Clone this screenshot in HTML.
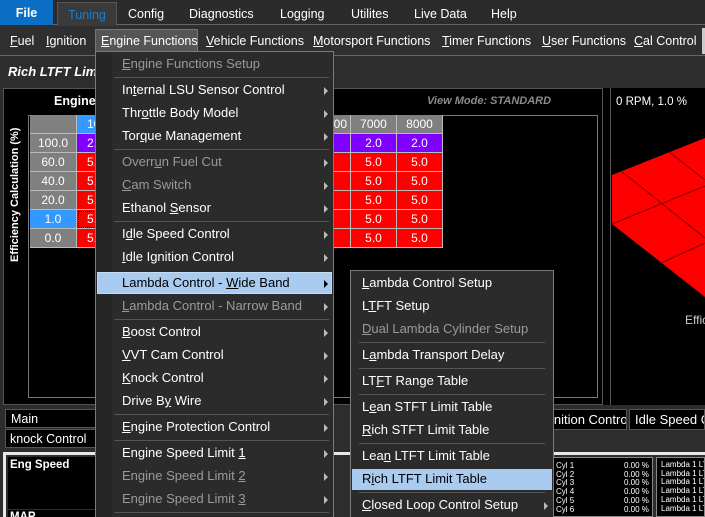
<!DOCTYPE html>
<html><head><meta charset="utf-8"><style>
*{margin:0;padding:0;box-sizing:border-box}
html,body{overflow:hidden}
body{width:705px;height:517px;overflow:hidden;background:#2d2d2d;font-family:"Liberation Sans","DejaVu Sans",sans-serif;font-size:12.5px;color:#fff;position:relative}
.a{position:absolute;white-space:nowrap}
u{text-decoration:underline}
.mi{position:absolute;left:122px;height:22px;line-height:22px;font-size:13px;color:#fff;white-space:nowrap}
.g{color:#9a9a9a}
.ar{position:absolute;right:4px;width:0;height:0;border-top:4px solid transparent;border-bottom:4px solid transparent;border-left:4px solid #bbb}
.sep{position:absolute;left:112px;right:8px;height:1px;background:#555}
.si{position:absolute;left:11px;height:22px;line-height:22px;font-size:13px;white-space:nowrap}
.ssep{position:absolute;left:8px;right:8px;height:1px;background:#555}
.c{position:absolute;height:19px;line-height:19px;text-align:center;font-size:12px;border-right:1px solid #bbb;border-bottom:1px solid #bbb}
</style></head><body>
<!-- top menu -->
<div class="a" style="left:0;top:0;width:705px;height:25px;background:#2b2b2b;border-bottom:1px solid #666"></div>
<div class="a" style="left:0;top:0;width:53px;height:25px;background:#0a6fc4;font-weight:bold;line-height:26px;text-align:center;font-size:12.5px">File</div>
<div class="a" style="left:57px;top:2px;width:60px;height:24px;background:#3a3a3a;border:1px solid #555;border-bottom:none;color:#1a7fd0;line-height:24px;text-align:center">Tuning</div>
<div class="a" style="left:128px;top:7px">Config</div>
<div class="a" style="left:189px;top:7px">Diagnostics</div>
<div class="a" style="left:280px;top:7px">Logging</div>
<div class="a" style="left:351px;top:7px">Utilites</div>
<div class="a" style="left:414px;top:7px">Live Data</div>
<div class="a" style="left:491px;top:7px">Help</div>
<!-- second bar -->
<div class="a" style="left:0;top:26px;width:705px;height:30px;background:#2f2f2f;border-bottom:1px solid #666"></div>
<div class="a" style="left:10px;top:34px"><u>F</u>uel</div>
<div class="a" style="left:46px;top:34px"><u>I</u>gnition</div>
<div class="a" style="left:95px;top:29px;width:103px;height:23px;background:#555;border:1px solid #777"></div>
<div class="a" style="left:101px;top:34px"><u>E</u>ngine Functions</div>
<div class="a" style="left:206px;top:34px"><u>V</u>ehicle Functions</div>
<div class="a" style="left:313px;top:34px"><u>M</u>otorsport Functions</div>
<div class="a" style="left:442px;top:34px"><u>T</u>imer Functions</div>
<div class="a" style="left:542px;top:34px"><u>U</u>ser Functions</div>
<div class="a" style="left:634px;top:34px"><u>C</u>al Control</div>
<div class="a" style="left:702px;top:28px;width:3px;height:26px;background:#ccc"></div>
<div class="a" style="left:8px;top:64px;font-weight:bold;font-style:italic;font-size:13px">Rich LTFT Limit Table</div>
<!-- main left panel -->
<div class="a" style="left:3px;top:88px;width:600px;height:317px;background:#000;border:1px solid #555"></div>
<div class="a" style="left:54px;top:94px;font-weight:bold;font-size:12.5px">Engine Speed</div>
<div class="a" style="left:427px;top:95px;font-weight:bold;font-style:italic;font-size:11px;color:#8a8a8a">View Mode: STANDARD</div>
<div class="a" style="left:28px;top:115px;width:570px;height:283px;border:1px solid #777"></div>
<div class="a" style="left:9px;top:262px;transform:rotate(-90deg);transform-origin:0 0;font-weight:bold;font-size:11px">Efficiency Calculation (%)</div>
<!-- table -->
<div class="c" style="left:30px;top:115px;width:47px;background:#808080"></div>
<div class="c" style="left:77px;top:115px;width:60px;background:#3399ff;text-align:left;padding-left:10px">1000</div>
<div class="c" style="left:30px;top:134px;width:47px;background:#808080">100.0</div>
<div class="c" style="left:30px;top:153px;width:47px;background:#808080">60.0</div>
<div class="c" style="left:30px;top:172px;width:47px;background:#808080">40.0</div>
<div class="c" style="left:30px;top:191px;width:47px;background:#808080">20.0</div>
<div class="c" style="left:30px;top:210px;width:47px;background:#3399ff">1.0</div>
<div class="c" style="left:30px;top:229px;width:47px;background:#808080">0.0</div>
<div class="c" style="left:77px;top:134px;width:60px;background:#8000ff;text-align:left;padding-left:10px">2.0</div>
<div class="c" style="left:77px;top:153px;width:60px;background:#f00;text-align:left;padding-left:10px">5.0</div>
<div class="c" style="left:77px;top:172px;width:60px;background:#f00;text-align:left;padding-left:10px">5.0</div>
<div class="c" style="left:77px;top:191px;width:60px;background:#f00;text-align:left;padding-left:10px">5.0</div>
<div class="c" style="left:77px;top:210px;width:60px;background:#f00;text-align:left;padding-left:10px;outline:1px dotted #000;outline-offset:-2px">5.0</div>
<div class="c" style="left:77px;top:229px;width:60px;background:#f00;text-align:left;padding-left:10px">5.0</div>
<div class="c" style="left:300px;top:115px;width:51px;background:#808080;text-align:right;padding-right:3px">6000</div>
<div class="c" style="left:351px;top:115px;width:46px;background:#808080">7000</div>
<div class="c" style="left:397px;top:115px;width:46px;background:#808080">8000</div>
<div class="c" style="left:300px;top:134px;width:51px;background:#8000ff"></div>
<div class="c" style="left:351px;top:134px;width:46px;background:#8000ff">2.0</div>
<div class="c" style="left:397px;top:134px;width:46px;background:#8000ff">2.0</div>
<div class="c" style="left:300px;top:153px;width:51px;background:#f00"></div><div class="c" style="left:351px;top:153px;width:46px;background:#f00">5.0</div><div class="c" style="left:397px;top:153px;width:46px;background:#f00">5.0</div>
<div class="c" style="left:300px;top:172px;width:51px;background:#f00"></div><div class="c" style="left:351px;top:172px;width:46px;background:#f00">5.0</div><div class="c" style="left:397px;top:172px;width:46px;background:#f00">5.0</div>
<div class="c" style="left:300px;top:191px;width:51px;background:#f00"></div><div class="c" style="left:351px;top:191px;width:46px;background:#f00">5.0</div><div class="c" style="left:397px;top:191px;width:46px;background:#f00">5.0</div>
<div class="c" style="left:300px;top:210px;width:51px;background:#f00"></div><div class="c" style="left:351px;top:210px;width:46px;background:#f00">5.0</div><div class="c" style="left:397px;top:210px;width:46px;background:#f00">5.0</div>
<div class="c" style="left:300px;top:229px;width:51px;background:#f00"></div><div class="c" style="left:351px;top:229px;width:46px;background:#f00">5.0</div><div class="c" style="left:397px;top:229px;width:46px;background:#f00">5.0</div>
<!-- right panel -->
<div class="a" style="left:603px;top:88px;width:8px;height:317px;background:#000;border-right:1px solid #555"></div>
<div class="a" style="left:611px;top:88px;width:94px;height:317px;background:#000"></div>
<svg class="a" style="left:611px;top:88px" width="94" height="317">
<polygon points="1,87 94,50 94,209 1,136" fill="#ff0000"/>
<g stroke="#800000" stroke-width="1"><line x1="10" y1="83" x2="94" y2="150"/><line x1="58" y1="64" x2="94" y2="92"/><line x1="1" y1="136" x2="94" y2="98"/><line x1="50" y1="175" x2="94" y2="155"/></g>
<text x="5" y="17" fill="#fff" font-size="11.5" font-family="Liberation Sans">0 RPM, 1.0 %</text>
<text x="74" y="236" fill="#ccc" font-size="12" font-family="Liberation Sans">Efficiency</text>
</svg>
<!-- bottom -->
<div class="a" style="left:0;top:405px;width:705px;height:112px;background:#2d2d2d"></div>
<div class="a" style="left:5px;top:409px;width:92px;height:19px;background:#000;border:1px solid #555;padding-left:5px;line-height:18px">Main</div>
<div class="a" style="left:5px;top:429px;width:92px;height:19px;background:#000;border:1px solid #555;padding-left:4px;line-height:18px">knock Control</div>
<div class="a" style="left:540px;top:409px;width:87px;height:21px;background:#000;border:1px solid #555;line-height:20px;padding-left:2px;font-size:13px;overflow:hidden">Ignition Control</div>
<div class="a" style="left:629px;top:409px;width:76px;height:21px;background:#000;border:1px solid #555;line-height:20px;padding-left:5px;font-size:13px;overflow:hidden">Idle Speed Control</div>
<div class="a" style="left:3px;top:452px;width:702px;height:3px;background:#e8e8e8"></div>
<div class="a" style="left:3px;top:452px;width:3px;height:65px;background:#e8e8e8"></div>
<div class="a" style="left:8px;top:457px;width:90px;height:52px;background:#000;font-weight:bold;font-size:11.5px;padding:2px">Eng Speed</div>
<div class="a" style="left:8px;top:510px;width:90px;height:7px;background:#000;font-weight:bold;font-size:11.5px;padding-left:2px;line-height:14px;overflow:hidden">MAP</div>
<div class="a" style="left:553px;top:457px;width:100px;height:60px;background:#000;border:1px solid #888;font-size:8px;line-height:8.7px;padding:4px 0 0 2px;overflow:hidden">Cyl 1<span style="position:absolute;left:70px">0.00 %</span><br>Cyl 2<span style="position:absolute;left:70px">0.00 %</span><br>Cyl 3<span style="position:absolute;left:70px">0.00 %</span><br>Cyl 4<span style="position:absolute;left:70px">0.00 %</span><br>Cyl 5<span style="position:absolute;left:70px">0.00 %</span><br>Cyl 6<span style="position:absolute;left:70px">0.00 %</span></div>
<div class="a" style="left:656px;top:457px;width:49px;height:60px;background:#000;border:1px solid #888;font-size:8px;line-height:8.7px;padding:3px 0 0 4px;overflow:hidden">Lambda 1 LTFT<br>Lambda 1 LTFT<br>Lambda 1 LTFT<br>Lambda 1 LTFT<br>Lambda 1 LTFT<br>Lambda 1 LTFT</div>
<!-- main dropdown -->
<div class="a" style="left:95px;top:51px;width:239px;height:466px;background:#2b2b2b;border:1px solid #7a7a7a;border-bottom:none"></div>
<div class="a" style="left:96px;top:52px;width:16px;height:465px;background:#262626"></div>
<div class="mi g" style="top:53px"><u>E</u>ngine Functions Setup</div>
<div class="sep a" style="top:77px;left:114px;width:215px"></div>
<div class="mi" style="top:79px">In<u>t</u>ernal LSU Sensor Control</div><div class="ar a" style="left:324px;top:87px"></div>
<div class="mi" style="top:102px">Thr<u>o</u>ttle Body Model</div><div class="ar a" style="left:324px;top:110px"></div>
<div class="mi" style="top:125px">Tor<u>q</u>ue Management</div><div class="ar a" style="left:324px;top:133px"></div>
<div class="sep a" style="top:149px;left:114px;width:215px"></div>
<div class="mi g" style="top:151px">Overr<u>u</u>n Fuel Cut</div><div class="ar a" style="left:324px;top:159px"></div>
<div class="mi g" style="top:174px"><u>C</u>am Switch</div><div class="ar a" style="left:324px;top:182px"></div>
<div class="mi" style="top:197px">Ethanol <u>S</u>ensor</div><div class="ar a" style="left:324px;top:205px"></div>
<div class="sep a" style="top:221px;left:114px;width:215px"></div>
<div class="mi" style="top:223px">I<u>d</u>le Speed Control</div><div class="ar a" style="left:324px;top:231px"></div>
<div class="mi" style="top:246px"><u>I</u>dle Ignition Control</div><div class="ar a" style="left:324px;top:254px"></div>
<div class="a" style="left:97px;top:272px;width:235px;height:22px;background:#a9cbf0;border:1px solid #c5dcf5"></div>
<div class="mi" style="top:272px;color:#000">Lambda Control - <u>W</u>ide Band</div><div class="ar a" style="left:324px;top:280px;border-left-color:#000"></div>
<div class="mi g" style="top:295px"><u>L</u>ambda Control - Narrow Band</div><div class="ar a" style="left:324px;top:303px"></div>
<div class="sep a" style="top:319px;left:114px;width:215px"></div>
<div class="mi" style="top:321px"><u>B</u>oost Control</div><div class="ar a" style="left:324px;top:329px"></div>
<div class="mi" style="top:344px"><u>V</u>VT Cam Control</div><div class="ar a" style="left:324px;top:352px"></div>
<div class="mi" style="top:367px"><u>K</u>nock Control</div><div class="ar a" style="left:324px;top:375px"></div>
<div class="mi" style="top:390px">Drive B<u>y</u> Wire</div><div class="ar a" style="left:324px;top:398px"></div>
<div class="sep a" style="top:414px;left:114px;width:215px"></div>
<div class="mi" style="top:416px"><u>E</u>ngine Protection Control</div><div class="ar a" style="left:324px;top:424px"></div>
<div class="sep a" style="top:440px;left:114px;width:215px"></div>
<div class="mi" style="top:442px">Engine Speed Limit <u>1</u></div><div class="ar a" style="left:324px;top:450px"></div>
<div class="mi g" style="top:465px">Engine Speed Limit <u>2</u></div><div class="ar a" style="left:324px;top:473px"></div>
<div class="mi g" style="top:488px">Engine Speed Limit <u>3</u></div><div class="ar a" style="left:324px;top:496px"></div>
<div class="sep a" style="top:512px;left:114px;width:215px"></div>
<!-- submenu -->
<div class="a" style="left:350px;top:270px;width:204px;height:247px;background:#2b2b2b;border:1px solid #7a7a7a;border-bottom:none">
<div class="si" style="top:1px"><u>L</u>ambda Control Setup</div>
<div class="si" style="top:24px">L<u>T</u>FT Setup</div>
<div class="si g" style="top:47px"><u>D</u>ual Lambda Cylinder Setup</div>
<div class="ssep" style="top:71px"></div>
<div class="si" style="top:73px">L<u>a</u>mbda Transport Delay</div>
<div class="ssep" style="top:97px"></div>
<div class="si" style="top:99px">LT<u>F</u>T Range Table</div>
<div class="ssep" style="top:123px"></div>
<div class="si" style="top:125px">L<u>e</u>an STFT Limit Table</div>
<div class="si" style="top:148px"><u>R</u>ich STFT Limit Table</div>
<div class="ssep" style="top:172px"></div>
<div class="si" style="top:174px">Lea<u>n</u> LTFT Limit Table</div>
<div style="position:absolute;left:1px;top:198px;width:200px;height:21px;background:#a9cbf0"></div>
<div class="si" style="top:197px;color:#000">R<u>i</u>ch LTFT Limit Table</div>
<div class="ssep" style="top:221px"></div>
<div class="si" style="top:223px"><u>C</u>losed Loop Control Setup</div>
<div class="ar" style="position:absolute;left:193px;top:231px"></div>
</div>
</body></html>
